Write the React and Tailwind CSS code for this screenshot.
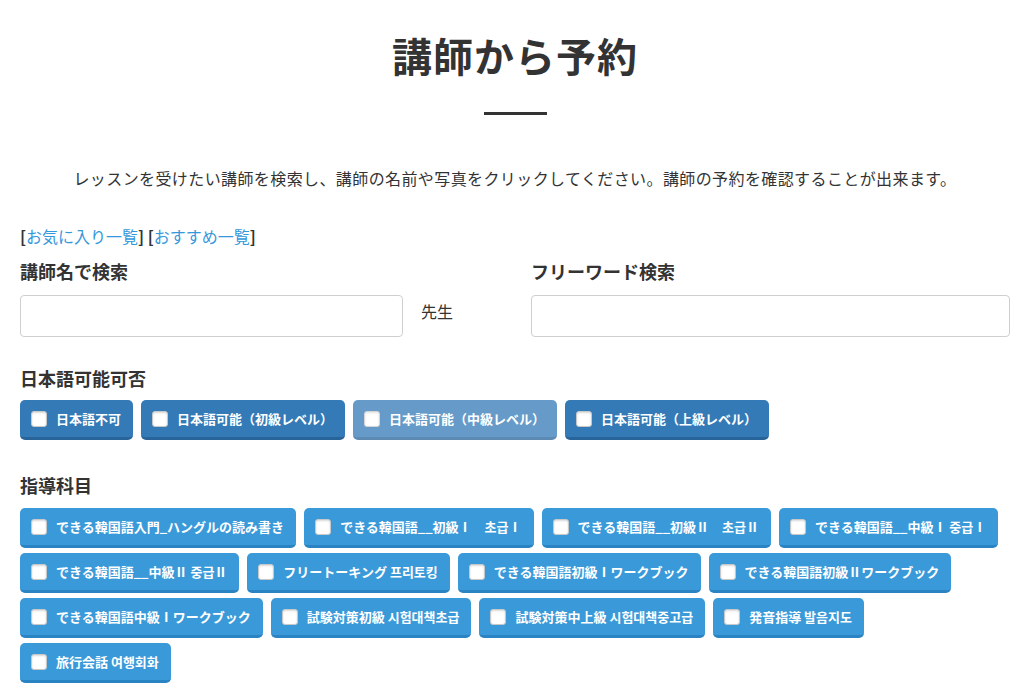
const levels = [
  { label: "日本語不可" },
  { label: "日本語可能（初級レベル）" },
  { label: "日本語可能（中級レベル）", dim: true },
  { label: "日本語可能（上級レベル）" },
];

const subjectRows = [
  [
    "できる韓国語入門_ハングルの読み書き",
    "できる韓国語__初級Ⅰ　초급Ⅰ",
    "できる韓国語__初級Ⅱ　초급Ⅱ",
    "できる韓国語__中級Ⅰ 중급Ⅰ",
  ],
  [
    "できる韓国語__中級Ⅱ 중급Ⅱ",
    "フリートーキング 프리토킹",
    "できる韓国語初級Ⅰワークブック",
    "できる韓国語初級Ⅱワークブック",
  ],
  [
    "できる韓国語中級Ⅰワークブック",
    "試験対策初級 시험대책초급",
    "試験対策中上級 시험대책중고급",
    "発音指導 발음지도",
  ],
  ["旅行会話 여행회화"],
];

function Box() {
  return (
    <span className="w-[16px] h-[16px] shrink-0 rounded-[3px] bg-white border border-[#c8c8c8] shadow-[inset_0_1px_2px_rgba(0,0,0,0.15)] mr-[9px]" />
  );
}

function CheckButton({ label, tone, dim }) {
  const colors =
    tone === "dark"
      ? "bg-[#337ab7] border-[#28649a]"
      : "bg-[#3a9ad9] border-[#2a84c3]";
  return (
    <label
      className={`inline-flex items-center h-[40px] pl-[11px] pr-[12px] rounded-[5px] border-b-[3px] text-white text-[13px] font-bold whitespace-nowrap ${colors} ${
        dim ? "opacity-75" : ""
      }`}
    >
      <Box />
      {label}
    </label>
  );
}

export default function App() {
  return (
    <div className="min-h-screen bg-white pl-[20px] pr-[14px] pt-[31px] text-[#333] font-['Noto_Sans_CJK_JP','Noto_Sans',sans-serif]">
      {/* Heading */}
      <h1 className="text-[40px] leading-[48px] font-bold text-center tracking-[1px]">講師から予約</h1>
      <div className="mx-auto mt-[33px] w-[63px] h-[3px] bg-[#333]" />
      <p className="mt-[51px] text-[16px] leading-[24px] text-center tracking-[0.4px]">
        レッスンを受けたい講師を検索し、講師の名前や写真をクリックしてください。講師の予約を確認することが出来ます。
      </p>

      {/* Links */}
      <div className="mt-[34px] text-[16px] leading-[24px]">
        <span className="font-bold">[</span>
        <a className="text-[#3498db]">お気に入り一覧</a>
        <span className="font-bold">]</span>{" "}
        <span className="font-bold">[</span>
        <a className="text-[#3498db]">おすすめ一覧</a>
        <span className="font-bold">]</span>
      </div>

      {/* Search fields */}
      <div className="mt-[10px] flex justify-between">
        <div>
          <div className="text-[18px] leading-[26px] font-bold">講師名で検索</div>
          <div className="mt-[11px] flex items-start">
            <input className="w-[383px] h-[42px] rounded-[4px] border border-[#cfcfcf] bg-white" />
            <span className="ml-[18px] pt-[4px] text-[16px] leading-[24px]">先生</span>
          </div>
        </div>
        <div className="w-[479px]">
          <div className="text-[18px] leading-[26px] font-bold">フリーワード検索</div>
          <input className="mt-[11px] w-full h-[42px] rounded-[4px] border border-[#cfcfcf] bg-white" />
        </div>
      </div>

      {/* Japanese ability */}
      <div className="mt-[28px] text-[18px] leading-[26px] font-bold">日本語可能可否</div>
      <div className="mt-[9px] flex gap-[8px]">
        {levels.map((l) => (
          <CheckButton key={l.label} label={l.label} tone="dark" dim={l.dim} />
        ))}
      </div>

      {/* Subjects */}
      <div className="mt-[32px] text-[18px] leading-[26px] font-bold">指導科目</div>
      <div className="mt-[10px] flex flex-col gap-[5px]">
        {subjectRows.map((row, i) => (
          <div key={i} className="flex gap-[8px]">
            {row.map((s) => (
              <CheckButton key={s} label={s} tone="light" />
            ))}
          </div>
        ))}
      </div>
    </div>
  );
}
